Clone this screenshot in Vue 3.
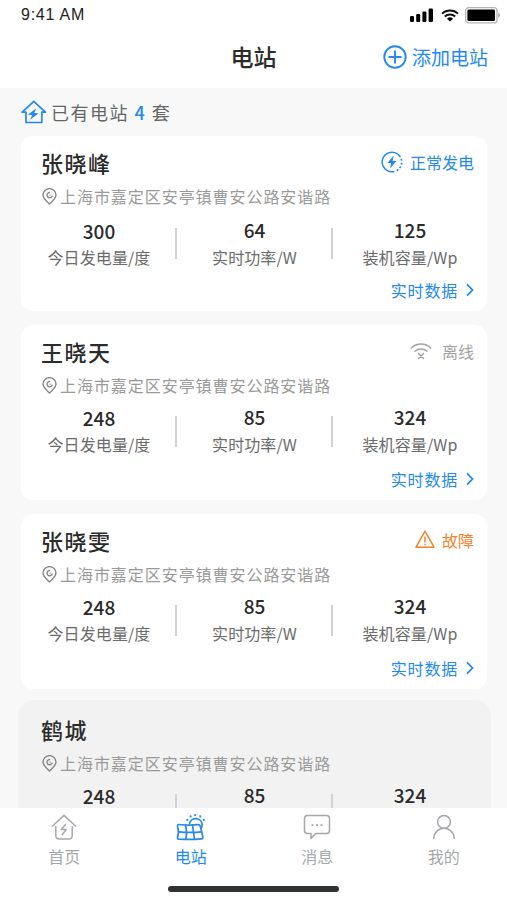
<template>
  <div class="page">
    <header class="header">
      <div class="status-bar">
        <span class="time">9:41 AM</span>
        <div class="status-icons">
          <svg class="signal" width="24" height="14" viewBox="0 0 24 14">
            <rect x="0" y="8" width="4" height="6" rx="1.2" />
            <rect x="6.2" y="6" width="4" height="8" rx="1.2" />
            <rect x="12.4" y="3.5" width="4" height="10.5" rx="1.2" />
            <rect x="18.6" y="0.5" width="4.4" height="13.5" rx="1.2" />
          </svg>
          <svg class="wifi" width="18" height="13" viewBox="0 0 18 13">
            <path d="M1 4.6a11.6 11.6 0 0 1 16 0M3.8 7.6a7.6 7.6 0 0 1 10.4 0" fill="none" stroke="#111" stroke-width="2" />
            <path d="M9 12.6L6 9.7a4.4 4.4 0 0 1 6 0z" />
          </svg>
          <svg class="battery" width="36" height="17" viewBox="0 0 36 17">
            <rect x="0.7" y="0.7" width="31.3" height="15.2" rx="3" fill="#fff" stroke="#b5b5b5" stroke-width="1.3" />
            <rect x="2.4" y="2.5" width="27.6" height="11.6" rx="1.4" />
            <path d="M33.2 5.6a3 3 0 0 1 0 5.4z" fill="#aaa" />
          </svg>
        </div>
      </div>
      <div class="nav-bar">
        <h1 class="title">电站</h1>
        <div class="add-btn">
          <svg width="24" height="24" viewBox="0 0 24 24" fill="none" stroke="#2389ee" stroke-width="1.9">
            <circle cx="12" cy="12" r="10.7" />
            <path d="M12 5.5v13M5.5 12h13" />
          </svg>
          <span>添加电站</span>
        </div>
      </div>
    </header>

    <main class="content">
      <div class="summary">
        <svg width="26" height="24" viewBox="0 0 26 24" fill="none" stroke="#2389ee" stroke-width="1.7" stroke-linejoin="round">
          <path d="M1.2 12.2L12.8 1.3l11.6 10.9h-3.6v10.3H5V12.2z" />
          <path d="M15.4 8.2l-8.4 6.4 4.2.6-2.2 4.6 8.4-6.200-4.200-.8z" fill="#2389ee" stroke="none" />
        </svg>
        <span>已有电站 <b>4</b> 套</span>
      </div>

      <section
        v-for="station in stations"
        :key="station.name"
        :class="['card', { 'card-pressed': station.pressed }]"
      >
        <div class="card-head">
          <h2 class="name">{{ station.name }}</h2>
          <div v-if="station.status" :class="['status', `status-${station.status}`]">
            <svg v-if="station.status === 'normal'" width="22" height="22" viewBox="0 0 22 22" fill="none" stroke="currentColor" stroke-width="1.5">
              <path d="M13.4 20.5A9.8 9.8 0 1 1 19.4 6" />
              <path d="M20.2 8a9.8 9.8 0 0 1-5.8 12.2" stroke-width="1.8" stroke-dasharray="1.8 2" />
              <path d="M12.6 4.500l-6.200 7.500h3.700l-1 5.500 6.400-7.600h-3.900z" fill="currentColor" stroke="none" />
            </svg>
            <svg v-else-if="station.status === 'offline'" width="22" height="18" viewBox="0 0 22 18" fill="none" stroke="currentColor" stroke-width="1.5" stroke-linecap="round">
              <path d="M1.300 6a14 14 0 0 1 19.400 0M5 9.300a9 9 0 0 1 12 0" />
              <path d="M8.500 11.500l5 5M13.500 11.500l-5 5" />
            </svg>
            <svg v-else width="20" height="19" viewBox="0 0 20 19" fill="none" stroke="currentColor" stroke-width="1.5" stroke-linejoin="round">
              <path d="M10 1.200L19 17.200H1z" />
              <path d="M10 6.500v6M10 13.700v1.600" />
            </svg>
            <span>{{ statusText[station.status] }}</span>
          </div>
        </div>

        <div class="address">
          <svg width="15" height="17" viewBox="0 0 14 16" fill="none" stroke="#858585" stroke-width="1.3">
            <path d="M7 15C4 12.400.9 9.600.9 6.600a6.100 6 0 0 1 12.200 0C13.100 9.600 10 12.400 7 15z" />
            <path d="M7.600 4.300a2.500 2.500 0 1 0 2 2.800" />
            <path d="M7 6.700h1" />
          </svg>
          <span>上海市嘉定区安亭镇曹安公路安谐路</span>
        </div>

        <div class="metrics">
          <div v-for="(label, i) in labels" :key="label" class="metric">
            <div class="value">{{ station.values[i] }}</div>
            <div class="label">{{ label }}</div>
          </div>
        </div>

        <div v-if="!station.pressed" class="more">
          <span>实时数据</span>
          <svg width="8" height="14" viewBox="0 0 8 14" fill="none" stroke="#2389ee" stroke-width="1.8">
            <path d="M1 1.300l5.500 5.700L1 12.700" />
          </svg>
        </div>
      </section>
    </main>

    <footer class="footer">
      <nav class="tabs">
        <div class="tab">
          <svg width="26" height="26" viewBox="0 0 26 26" fill="none" stroke="currentColor" stroke-width="1.500" stroke-linecap="round" stroke-linejoin="round">
            <path d="M1.300 12.300L13 1.400l11.700 10.900" />
            <path d="M4.800 12.500v9q0 3.500 3.500 3.500h9.400q3.500 0 3.500-3.500v-9" />
            <path d="M14.500 10.500l-4.300 5h5l-4 5.200" />
          </svg>
          <span>首页</span>
        </div>
        <div class="tab tab-active">
          <svg width="30" height="27" viewBox="0 0 30 27" fill="none" stroke="currentColor" stroke-width="1.700" stroke-linecap="round" stroke-linejoin="round">
            <path d="M3 10.500q10 1.200 18.800.2 2-.2 2.500 1.700l2.500 10.300q.5 2-1.500 2.200-10 1-22.300.2-2-.2-1.400-2.200 1.800-5 0-10.200-.4-2.300 1.400-2.200z" />
            <path d="M3.200 17.800q11 1.300 22 0M9.500 11q2 7 .5 14M16.500 11q1 7 2 14" />
            <path d="M13.500 9.300a6.500 6.500 0 0 1 12.700 1.300q0 2-1.300 3.600" />
            <path d="M11.300 5.900v.1M14.600 2.300v.1M19.200 1.100v.1M24.300 2.300v.1M27.800 5.800v.1" stroke-width="2.100" />
          </svg>
          <span>电站</span>
        </div>
        <div class="tab">
          <svg width="28" height="26" viewBox="0 0 28 26" fill="none" stroke="currentColor" stroke-width="1.500" stroke-linejoin="round">
            <path d="M4.500 1.400h19q3 0 3 3v12q0 3-3 3H12.500L8 24.600v-5.200H4.500q-3 0-3-3v-12q0-3 3-3z" />
            <path d="M8.500 11.200h2M13 11.200h2M17.500 11.200h2" stroke-width="1.800" />
          </svg>
          <span>消息</span>
        </div>
        <div class="tab">
          <svg width="24" height="26" viewBox="0 0 24 26" fill="none" stroke="currentColor" stroke-width="1.500" stroke-linecap="round">
            <circle cx="12" cy="7.900" r="6.400" />
            <path d="M1.700 24.500c.4-6 4.600-10.200 10.300-10.200s9.900 4.200 10.300 10.200" />
          </svg>
          <span>我的</span>
        </div>
      </nav>
      <div class="home-indicator"></div>
    </footer>
  </div>
</template>

<script setup>
const labels = ['今日发电量/度', '实时功率/W', '装机容量/Wp']

const statusText = {
  normal: '正常发电',
  offline: '离线',
  fault: '故障'
}

const stations = [
  { name: '张晓峰', status: 'normal', values: [300, 64, 125] },
  { name: '王晓天', status: 'offline', values: [248, 85, 324] },
  { name: '张晓雯', status: 'fault', values: [248, 85, 324] },
  { name: '鹤城', status: '', values: [248, 85, 324], pressed: true }
]
</script>

<style>
body {
  margin: 0;
}
</style>

<style scoped>
.page {
  display: flex;
  flex-direction: column;
  height: 900px;
  overflow: hidden;
  background: #f8f8f8;
  font-family: "Noto Sans CJK SC", "Noto Sans", sans-serif;
}

svg {
  display: block;
  flex: none;
}

.header {
  flex: none;
  height: 88px;
  background: #fff;
}

.status-bar {
  display: flex;
  justify-content: space-between;
  height: 30px;
  padding: 0 6px 0 21px;
  align-items: center;
}

.time {
  font-family: "Liberation Sans", Arial, sans-serif;
  font-size: 16px;
  letter-spacing: 0.75px;
  color: #222;
}

.status-icons {
  display: flex;
  align-items: center;
}

.wifi {
  margin: 0 6px 0 7px;
}

.nav-bar {
  display: grid;
  grid-template-columns: 1fr auto 1fr;
  align-items: center;
  height: 54px;
}

.title {
  grid-column: 2;
  margin: 0 0 2px;
  font-size: 23px;
  line-height: 32px;
  font-weight: 500;
  color: #2b2b2b;
}

.add-btn {
  display: flex;
  justify-self: end;
  align-items: center;
  gap: 5px;
  margin-right: 19px;
  font-size: 19px;
  line-height: 28px;
  color: #2389ee;
}

.content {
  flex: 1;
  min-height: 0;
  overflow: hidden;
  padding: 0 20px 0 21px;
}

.summary {
  box-sizing: border-box;
  display: flex;
  align-items: center;
  gap: 4px;
  height: 48px;
  padding-bottom: 1px;
  font-size: 18px;
  letter-spacing: 1.5px;
  color: #666;
}

.summary svg {
  margin-top: 1px;
}

.summary b {
  font-weight: 500;
  color: #2389ee;
}

.card {
  box-sizing: border-box;
  height: 175px;
  margin-bottom: 14px;
  padding: 12px 13px 0 20px;
  border-radius: 12px;
  background: #fff;
}

.card-pressed {
  margin: -3px -4px 0 -3px;
  padding: 15px 17px 0 23px;
  border-radius: 16px;
  background: #f2f2f2;
}

.card-head {
  display: flex;
  justify-content: space-between;
  height: 30px;
}

.name {
  margin: 0;
  font-size: 22px;
  line-height: 29px;
  font-weight: 500;
  letter-spacing: 1.5px;
  color: #2b2b2b;
}

.status {
  display: flex;
  align-items: center;
  gap: 7px;
  height: 27px;
  font-size: 16px;
}

.status-normal {
  color: #2389ee;
}

.status-offline {
  gap: 10px;
  color: #a3a3a3;
}

.status-fault {
  color: #f5812b;
}

.address {
  display: flex;
  align-items: center;
  gap: 3px;
  height: 36px;
  padding-left: 1px;
  font-size: 16px;
  letter-spacing: 0.95px;
  color: #9a9a9a;
}

.metrics {
  display: grid;
  grid-template-columns: 155px 156px 155px;
  height: 59px;
  margin: 0 -13px 0 -20px;
}

.metric {
  position: relative;
  padding: 1px 0 0 1px;
  text-align: center;
}

.card:first-of-type .metric {
  padding-top: 3px;
}

.metric + .metric::before {
  content: '';
  position: absolute;
  left: -1px;
  top: 13px;
  width: 2px;
  height: 31px;
  background: #d2d2d2;
}

.card:first-of-type .metric::before {
  top: 14px;
}

.value {
  font-size: 19px;
  line-height: 27px;
  font-weight: 500;
  color: #2b2b2b;
}

.metric + .metric .value {
  margin: -1px 0 1px;
}

.label {
  font-size: 16px;
  line-height: 27px;
  letter-spacing: 0.1px;
  color: #6b6b6b;
}

.more {
  display: flex;
  justify-content: flex-end;
  align-items: center;
  gap: 8px;
  height: 34px;
  font-size: 16px;
  letter-spacing: 0.8px;
  color: #2389ee;
}

.footer {
  flex: none;
  height: 92px;
  background: #fff;
}

.tabs {
  display: grid;
  grid-template-columns: repeat(4, 126.5px);
  height: 80px;
  padding-left: 1px;
}

.tab {
  display: flex;
  flex-direction: column;
  align-items: center;
  padding-top: 6px;
  font-size: 16px;
  line-height: 24px;
  color: #a6a8ac;
}

.tab-active {
  color: #2389ee;
}

.tab span {
  margin-top: 4px;
}

.tab-active span {
  margin-top: 3px;
}

.home-indicator {
  width: 171px;
  height: 6px;
  margin: -2px auto 0;
  border-radius: 3px;
  background: #303231;
}
</style>
